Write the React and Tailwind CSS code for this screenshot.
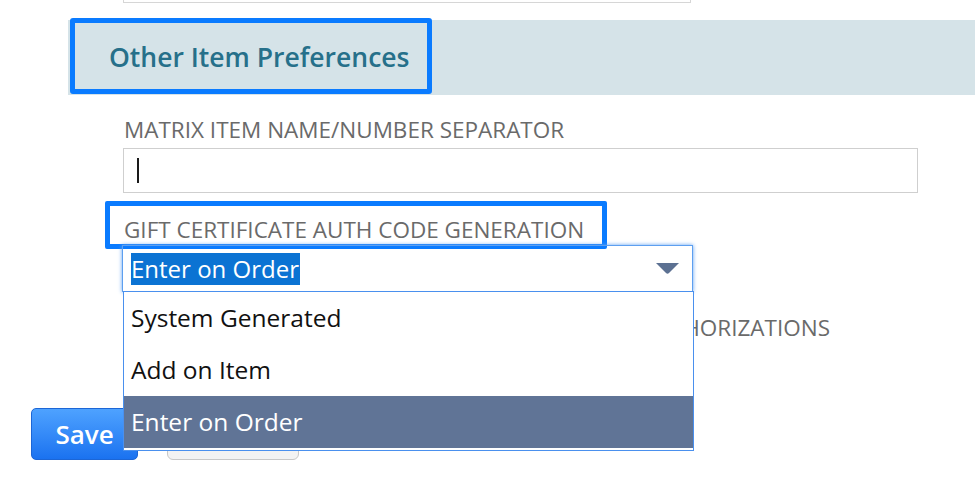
import React from 'react';

const options = ['System Generated', 'Add on Item', 'Enter on Order'];

const App = () => {
    const selected = 'Enter on Order';

    return (
        <div className="relative w-[975px] h-[494px] bg-white overflow-hidden font-['Open_Sans',sans-serif]">
            {/* bottom edge of the field above */}
            <div className="ml-[123px] w-[568px] h-[3px] border-x border-b border-[#d6d6d6]" />

            {/* section header */}
            <div className="relative mt-[17px] ml-[68px] h-[75px] bg-[#d5e3e8] flex items-center pl-[41px]">
                <span className="text-[26.5px] font-semibold text-[#26708a]">Other Item Preferences</span>
                <div className="absolute left-[2px] top-[-2px] w-[362px] h-[76px] border-[5px] border-[#0a7bff] rounded-[3px]" />
            </div>

            <div className="pl-[123px]">
                <div className="mt-[20px] text-[22.5px] leading-[30px] text-[#6a6a6a] pl-[1px] whitespace-nowrap">MATRIX ITEM NAME/NUMBER SEPARATOR</div>
                <div className="mt-[3px] w-[795px] h-[45px] border border-[#cfcfcf] flex items-center">
                    <span className="ml-[13px] w-[2px] h-[25px] bg-[#1a1a1a]" />
                </div>

                <div className="relative mt-[22px] text-[22.5px] leading-[30px] text-[#6a6a6a] pl-[1px] whitespace-nowrap">
                    GIFT CERTIFICATE AUTH CODE GENERATION
                    <div className="absolute left-[-18px] top-[-14px] w-[502px] h-[48px] border-[5px] border-[#0a7bff] rounded-[2px]" />
                </div>

                <div className="relative -ml-[1px] w-[571px] h-[47px] border border-[#5d9ff0] shadow-[0_0_4px_#5d9ff0] flex items-center justify-between pl-[8px] pr-[13px]">
                    <span className="bg-[#0b73d3] text-white text-[24px] leading-[32px] pr-[1px]">{selected}</span>
                    <svg width="23" height="11" viewBox="0 0 23 11">
                        <path d="M0 0 H23 L13 10 Q11.5 11.5 10 10 Z" fill="#5c7192" />
                    </svg>

                    {/* open list */}
                    <div className="absolute z-10 left-0 top-[45px] w-[571px] bg-white border border-[#4a90ee] pb-[2px]">
                        {options.map(opt => (
                            <div
                                key={opt}
                                className={`h-[52px] flex items-center pl-[7px] text-[24.5px] ${opt === selected ? 'bg-[#607496] text-white' : 'text-[#111]'}`}
                            >
                                {opt}
                            </div>
                        ))}
                    </div>
                </div>

                <div className="mt-[21px] w-[707px] text-right text-[22.5px] leading-[30px] text-[#6a6a6a] whitespace-nowrap">
                    USE GIFT CERTIFICATE AUTHORIZATIONS
                </div>
            </div>

            <div className="mt-[65px] ml-[31px] flex items-center gap-[29px]">
                <button className="w-[107px] h-[52px] rounded-[5px] border border-[#1c66d6] bg-gradient-to-b from-[#4ea2ff] to-[#1a72f0] text-white text-[26px] font-semibold">
                    Save
                </button>
                <button className="w-[132px] h-[52px] rounded-[6px] border border-[#c8c8c8] bg-[#f3f3f3] text-[#333] text-[20px]">
                    Cancel
                </button>
            </div>
        </div>
    );
};

export default App;
